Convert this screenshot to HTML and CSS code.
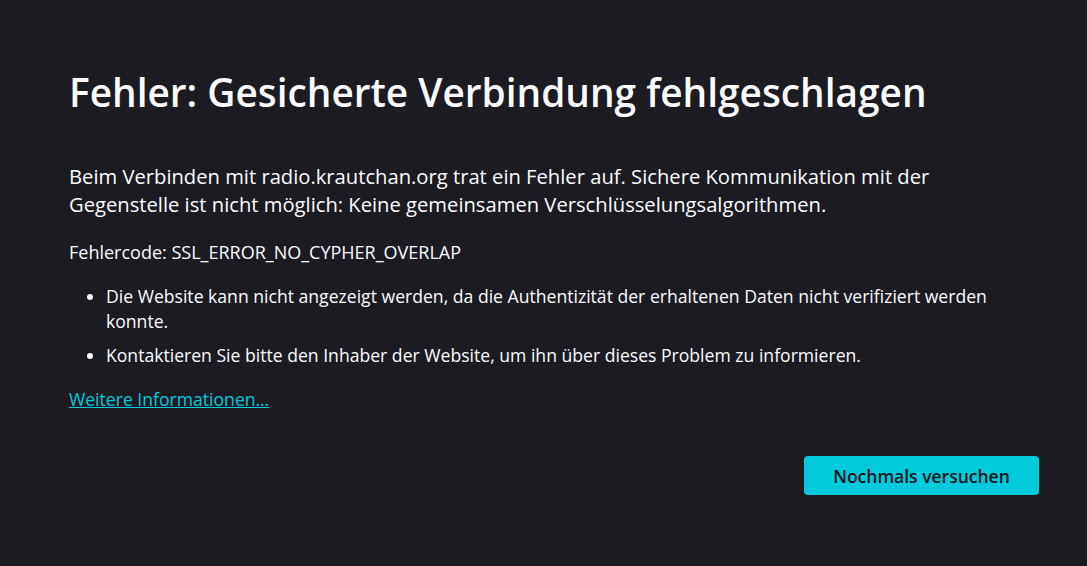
FILE: index.html
```html
<!DOCTYPE html>
<html lang="de">
<head>
  <meta charset="UTF-8">
  <title>Fehler: Gesicherte Verbindung fehlgeschlagen</title>
  <link rel="stylesheet" href="styles.css">
</head>
<body>
  <div class="container">
    <h1 class="title">Fehler: Gesicherte Verbindung fehlgeschlagen</h1>
    <p class="short-desc">Beim Verbinden mit radio.krautchan.org trat ein Fehler auf. Sichere Kommunikation mit der Gegenstelle ist nicht möglich: Keine gemeinsamen Verschlüsselungsalgorithmen.</p>
    <p class="error-code">Fehlercode: SSL_ERROR_NO_CYPHER_OVERLAP</p>
    <ul class="long-desc">
      <li>Die Website kann nicht angezeigt werden, da die Authentizität der erhaltenen Daten nicht verifiziert werden konnte.</li>
      <li>Kontaktieren Sie bitte den Inhaber der Website, um ihn über dieses Problem zu informieren.</li>
    </ul>
    <a class="learn-more" href="#">Weitere Informationen…</a>
    <div class="button-row">
      <button class="primary">Nochmals versuchen</button>
    </div>
  </div>
</body>
</html>
```

FILE: styles.css
```css
*{
    margin: 0;
    padding: 0;
    box-sizing: border-box;
}
body{
    background-color: #1c1b22;
    color: #fbfbfe;
    font-family: "Open Sans", "Noto Sans", sans-serif;
    font-size: 17.6px;
    min-height: 100vh;
}
.container{
    width: 970px;
    margin-left: 69px;
    padding-top: 66px;
}
.title{
    font-size: 38.8px;
    font-weight: 600;
    line-height: 52px;
    margin-bottom: 44px;
}
.short-desc{
    max-width: 940px;
    font-size: 20.2px;
    line-height: 28px;
    margin-bottom: 22px;
}
.error-code{
    font-size: 18px;
    line-height: 24px;
    margin-bottom: 20px;
}
.long-desc{
    padding-left: 37px;
    line-height: 25px;
}
.long-desc li{
    margin-bottom: 9px;
}
.learn-more{
    display: inline-block;
    margin-top: 10px;
    color: #00cadb;
    line-height: 25px;
}
.button-row{
    display: flex;
    justify-content: flex-end;
    margin-top: 44px;
}
.primary{
    width: 235px;
    height: 39px;
    background-color: #00cadb;
    color: #15141a;
    border: none;
    border-radius: 4px;
    font-family: "Open Sans", "Noto Sans", sans-serif;
    font-size: 17.5px;
    font-weight: 600;
    cursor: pointer;
}
```
